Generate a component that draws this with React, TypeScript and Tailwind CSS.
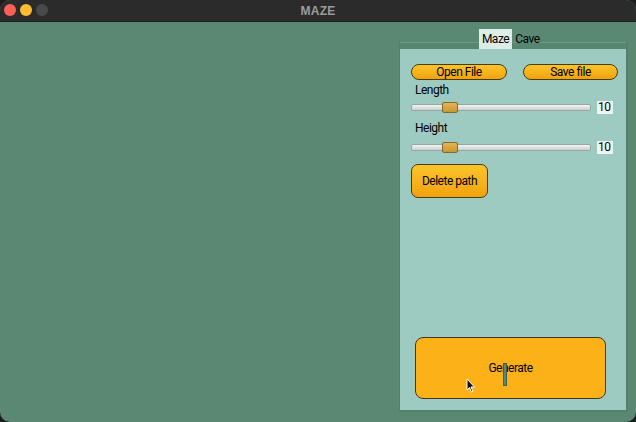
import React from "react";

function Slider({ value }: { value: number }) {
  return (
    <div className="flex items-center h-[14px]">
      <div className="relative w-[180px] h-[7px] rounded-[2px] border border-[#9aa6a3] bg-gradient-to-b from-[#f2f4f4] to-[#c9d0cf]">
        <div className="absolute left-[30px] -top-[3px] w-[16px] h-[11px] rounded-[2px] border border-[#7d6a3a] bg-gradient-to-b from-[#e6b452] to-[#c8982f]" />
      </div>
      <div className="ml-[6px] w-[16px] h-[13px] bg-[#eef4f2] text-[12px] leading-[13px] tracking-[-0.5px] text-black pl-[1px]">{value}</div>
    </div>
  );
}

export default function App() {
  return (
    <div
      className="w-[636px] h-[422px] bg-[#1c1c1c] overflow-hidden"
      style={{ fontFamily: 'Roboto, "Liberation Sans", Arial, sans-serif' }}
    >
      <div className="w-full h-full rounded-[10px] overflow-hidden flex flex-col bg-[#5b8872]">
        {/* title bar */}
        <div className="h-[22px] shrink-0 bg-[#2b2b2b] relative flex items-center justify-center border-b border-[#1e1e1e]">
          <div className="absolute left-[4px] top-[4px] flex gap-[4px]">
            <div className="w-[12px] h-[12px] rounded-full bg-[#fe5f57]" />
            <div className="w-[12px] h-[12px] rounded-full bg-[#febc2e]" />
            <div className="w-[12px] h-[12px] rounded-full bg-[#4a4a4a]" />
          </div>
          <span className="text-[12px] font-bold text-[#9c9c9c] tracking-[0.2px]" style={{ fontFamily: '"Liberation Sans", Arial, sans-serif' }}>MAZE</span>
        </div>

        {/* body */}
        <div className="flex-1 flex justify-end pr-[8px] pt-[7px] pb-[10px]">
          <div className="w-[229px] flex flex-col">
            {/* tabs */}
            <div className="relative z-10 h-[20px] -mb-[7px] flex pl-[80px] text-[12px] tracking-[-0.5px] text-black">
              <div className="w-[33px] h-[20px] bg-[#deece8] flex items-center justify-center">Maze</div>
              <div className="w-[31px] h-[20px] flex items-center justify-center">Cave</div>
            </div>
            {/* panel */}
            <div className="flex-1 border-l border-r-2 border-b-2 border-[#547f6a] bg-[#9ecbc1] flex flex-col text-[12px] tracking-[-0.5px] text-black">
              <div className="h-[7px] shrink-0 bg-[#578670] border-t border-[#6b9a83]" />
              <div className="flex-1 flex flex-col pl-[11px] pr-[8px] pt-[15px] pb-[11px]">
                <div className="flex justify-between">
                  <button className="w-[96px] h-[16px] rounded-full border border-[#4a3a10] bg-gradient-to-b from-[#fcc52a] to-[#f0a20c] text-[12px] leading-[14px]">
                    Open File
                  </button>
                  <button className="w-[95px] h-[16px] rounded-full border border-[#4a3a10] bg-gradient-to-b from-[#fcc52a] to-[#f0a20c] text-[12px] leading-[14px]">
                    Save file
                  </button>
                </div>
                <div className="mt-[3px] pl-[4px] h-[14px] leading-[14px]">Length</div>
                <div className="mt-[3px]">
                  <Slider value={10} />
                </div>
                <div className="mt-[7px] pl-[4px] h-[14px] leading-[14px]">Height</div>
                <div className="mt-[5px]">
                  <Slider value={10} />
                </div>
                <button className="mt-[10px] w-[77px] h-[34px] rounded-[7px] border border-[#4a3a10] bg-gradient-to-b from-[#fcc52a] to-[#f0a20c] text-[12px]">
                  Delete path
                </button>
                <div className="flex-1" />
                <div className="relative pl-[4px] pr-[11px]">
                  <button className="w-[191px] h-[62px] rounded-[8px] border border-[#3e3a2a] bg-[#fdb119] text-[12px]">
                    Generate
                  </button>
                  <div className="absolute left-[92px] top-[26px] w-[4px] h-[23px] bg-[#5b8872] border border-[#3f5e50]" />
                  <svg className="absolute left-[55px] top-[41px]" width="10" height="15" viewBox="0 0 10 15">
                    <path d="M1 1 L1 12 L3.5 9.5 L5.5 14 L7 13.3 L5 9 L8.5 9 Z" fill="#111" stroke="#fff" strokeWidth="1" />
                  </svg>
                </div>
              </div>
            </div>
          </div>
        </div>
      </div>
    </div>
  );
}
